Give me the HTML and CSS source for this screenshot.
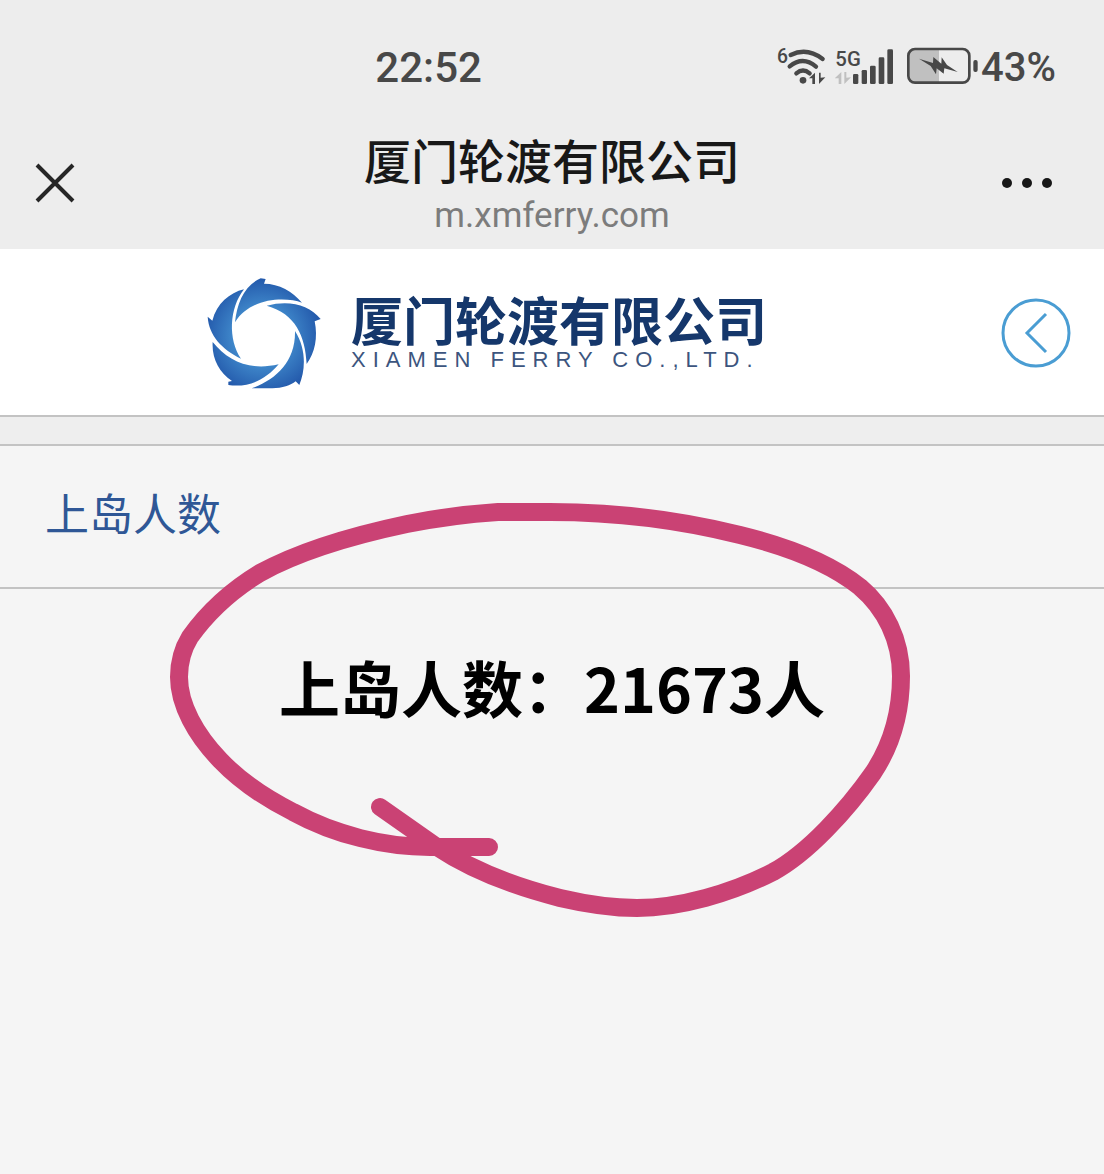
FILE: index.html
```html
<!DOCTYPE html>
<html lang="zh-CN">
<head>
    <meta charset="UTF-8">
    <meta name="viewport" content="width=device-width, initial-scale=1">
    <title>厦门轮渡有限公司</title>
    <link rel="stylesheet" href="styles.css">
</head>
<body>
<div class="top">
    <div class="status">
        <span class="time">22:52</span>
        <div class="signals">
            <svg class="wifi" width="52" height="48" viewBox="30 24 156 144">
                <text x="36" y="83" font-size="58">6</text>
                <g fill="none" stroke="#484848" stroke-width="13" stroke-linecap="round">
                    <path d="M77 60Q126 36 173 72"/>
                    <path d="M74 94Q114 62 153 95"/>
                    <path d="M94 115Q114 98 134 115"/>
                </g>
                <circle cx="114" cy="136" r="10"/>
                <path d="M132 130L150 113V147H142V130ZM162 113V147L181 127L167 128V113Z"/>
            </svg>
            <svg class="cell" width="60" height="40" viewBox="210 36 180 120">
                <text x="211" y="93" font-size="61">5G</text>
                <path class="pale" d="M209 130L229 111V147H221V130ZM238 111V147L258 127L244 128V111Z"/>
                <rect x="264" y="117" width="16" height="30" rx="4"/>
                <rect x="290" y="105" width="16" height="42" rx="4"/>
                <rect x="315" y="92" width="17" height="55" rx="4"/>
                <rect x="341" y="67" width="17" height="80" rx="4"/>
                <rect x="367" y="43" width="17" height="104" rx="4"/>
            </svg>
            <svg class="battery" width="72" height="40" viewBox="425 36 216 120">
                <path class="pale" d="M448 43H521V143H448Q430 143 430 125V61Q430 43 448 43Z"/>
                <rect x="429" y="42" width="183" height="101" rx="20" fill="none" stroke="#484848" stroke-width="8"/>
                <rect x="624" y="75" width="13" height="36" rx="6"/>
                <path d="M461 71L503 84L504 66L528 86L529 67L545 90L577 111L537 100L535 116L514 100L512 118L496 93Z"/>
            </svg>
            <span class="percent">43%</span>
        </div>
    </div>
    <div class="nav">
        <button class="close" type="button" aria-label="关闭">
            <svg width="40" height="40" viewBox="0 0 40 40"><path d="M2 2L38 38M38 2L2 38" stroke="#262626" stroke-width="4"/></svg>
        </button>
        <div class="title">
            <h1>厦门轮渡有限公司</h1>
            <p>m.xmferry.com</p>
        </div>
        <button class="more" type="button" aria-label="更多">
            <svg width="50" height="12" viewBox="0 0 50 12"><circle cx="5" cy="6" r="5"/><circle cx="25" cy="6" r="5"/><circle cx="45" cy="6" r="5"/></svg>
        </button>
    </div>
</div>

<div class="header">
    <div class="logo">
        <svg width="114" height="112" viewBox="34 32 342 336">
            <defs>
                <radialGradient id="blue" gradientUnits="userSpaceOnUse" cx="200" cy="210" r="175">
                    <stop offset="0.5" stop-color="#3f87ca"/>
                    <stop offset="1" stop-color="#2359ab"/>
                </radialGradient>
            </defs>
            <g fill="url(#blue)">
                <path d="M118 168C124 110 146 57 195 36L210 38L205 52C251 52 290 75 319 109C270 92 165 92 118 168Z"/>
                <path d="M213 118C280 100 340 115 375 158L357 165C367 213 358 260 333 293C329 210 300 142 213 118Z"/>
                <path d="M298 194C332 247 330 310 311 356L300 345C285 358 260 365 230 366H168C240 340 300 287 298 194Z"/>
                <path d="M249 294C211 340 158 365 98 356V346L109 344C70 318 48 275 51 227C96 282 158 315 249 294Z"/>
                <path d="M136 277C79 249 40 208 36 151L50 163C63 112 102 79 145 69C100 126 97 220 136 277Z"/>
            </g>
        </svg>
        <div class="name">
            <strong>厦门轮渡有限公司</strong>
            <span>XIAMEN FERRY CO.,LTD.</span>
        </div>
    </div>
    <a class="back" href="#" aria-label="返回">
        <svg width="70" height="70" viewBox="0 0 70 70" fill="none" stroke="#4a9dd3">
            <circle cx="35" cy="35" r="33" stroke-width="3"/>
            <path d="M45 16L26 35L45 54" stroke-width="3"/>
        </svg>
    </a>
</div>

<div class="content">
    <h2>上岛人数</h2>
    <p class="count">上岛人数：21673人</p>
    <!-- hand drawn ring -->
    <svg class="ring" viewBox="0 490 1104 430">
        <path d="M380 807L437 847C470 869 513 886 560 898C590 905 615 908 637 908C680 908 732 893 773 872C808 853 847 810 873 773C893 743 901 712 901 676C901 640 885 608 860 587C830 563 785 546 740 535C680 520 620 512 550 512H498C467 514 437 518 407 524C355 535 300 551 260 573C227 593 205 616 190 637C182 650 179 664 179 677C179 705 196 735 220 760C242 783 265 798 293 812C335 835 385 847 430 847H489"/>
    </svg>
</div>
</body>
</html>
```
FILE: styles.css
```css
* {
    padding: 0;
    margin: 0;
    box-sizing: border-box;
}

body {
    background: #f5f5f5;
    font-family: "Noto Sans CJK SC", sans-serif;
}

button {
    border: none;
    background: none;
    cursor: pointer;
}

svg {
    display: block;
}

.top {
    background: #ededed;
}

.status {
    display: flex;
    justify-content: space-between;
    align-items: center;
    height: 126px;
    padding: 8px 48px 0 34%;
    font-family: Roboto, sans-serif;
    font-weight: 500;
    color: #484848;
}

.time {
    font-size: 42px;
}

.signals {
    display: flex;
    align-items: center;
    fill: #484848;
}

.signals .pale {
    fill: #c0c0c0;
}

.wifi {
    margin-right: 8px;
}

.cell {
    margin-right: 12px;
}

.battery {
    margin-right: 2px;
}

.percent {
    font-size: 40px;
}

.nav {
    display: grid;
    grid-template-columns: 1fr auto 1fr;
    align-items: center;
    height: 123px;
    padding: 0 35px 9px;
}

.close {
    justify-self: start;
}

.title {
    text-align: center;
}

.title h1 {
    font-size: 47px;
    font-weight: 500;
    line-height: 66px;
    color: #181818;
}

.title p {
    font-family: Roboto, sans-serif;
    font-size: 35px;
    line-height: 48px;
    color: #7c7c7c;
}

.more {
    justify-self: end;
    margin-right: 17px;
    fill: #181818;
}

.header {
    display: flex;
    align-items: center;
    height: 168px;
    padding: 2px 33px 0;
    background: #fff;
    border-bottom: 2px solid #c3c3c3;
}

.logo {
    display: flex;
    flex: 1;
    justify-content: center;
    align-items: center;
    gap: 30px;
    margin-right: 60px;
}

.name strong {
    display: block;
    font-size: 52px;
    line-height: 54px;
    color: #15376b;
}

.name span {
    display: block;
    font-family: "Liberation Sans", sans-serif;
    font-size: 22px;
    line-height: 28px;
    letter-spacing: 7px;
    color: #3c557e;
}

.content {
    position: relative;
    min-height: 480px;
    border-top: 2px solid #c3c3c3;
    margin-top: 27px;
    box-shadow: 0 -27px #eee;
}

.content h2 {
    padding: 34px 45px 43px;
    border-bottom: 2px solid #c3c3c3;
    font-size: 44px;
    font-weight: 400;
    line-height: 64px;
    color: #2f5796;
}

.count {
    padding-top: 53px;
    font-size: 61px;
    font-weight: 700;
    line-height: 90px;
    text-align: center;
    color: #000;
}

.ring {
    position: absolute;
    top: 44px;
    left: 0;
    width: 100%;
    height: 430px;
    fill: none;
    stroke: #ca4274;
    stroke-width: 18px;
    stroke-linecap: round;
    stroke-linejoin: round;
}
```
